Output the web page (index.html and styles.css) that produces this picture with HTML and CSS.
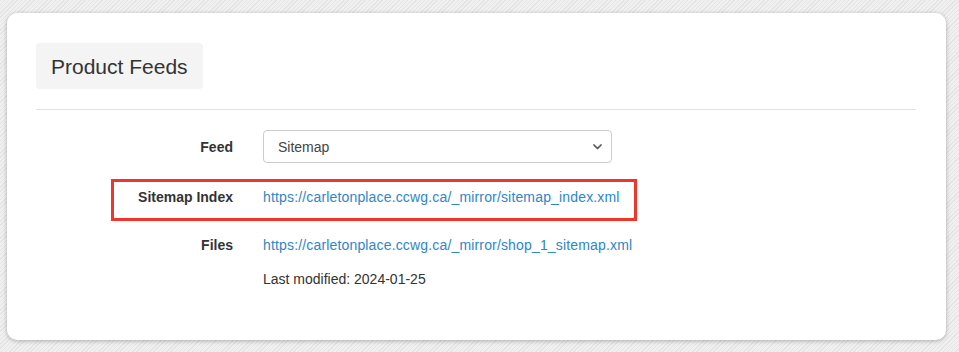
FILE: index.html
```html
<!DOCTYPE html>
<html>
  <head>
    <title>Product Feeds</title>
    <link rel="stylesheet" href="styles.css">
  </head>
  <body>
    <div class="panel">
      <h2 class="panel-title">Product Feeds</h2>
      <hr class="divider">

      <!-- Feed picker -->
      <div class="form-row feed-row">
        <label class="form-label">Feed</label>
        <div class="select-box">
          <span>Sitemap</span>
          <svg class="chevron" width="9" height="6" viewBox="0 0 9 6">
            <path d="M1 1 L4.5 4.5 L8 1" fill="none" stroke="#555" stroke-width="1.7" stroke-linecap="round" stroke-linejoin="round"/>
          </svg>
        </div>
      </div>

      <!-- Sitemap index (highlighted) -->
      <div class="form-row index-row">
        <label class="form-label">Sitemap Index</label>
        <a class="feed-link" href="#">https://carletonplace.ccwg.ca/_mirror/sitemap_index.xml</a>
        <div class="highlight"></div>
      </div>

      <!-- Files -->
      <div class="form-row files-row">
        <label class="form-label">Files</label>
        <div class="files">
          <a class="feed-link" href="#">https://carletonplace.ccwg.ca/_mirror/shop_1_sitemap.xml</a>
          <p class="modified">Last modified: 2024-01-25</p>
        </div>
      </div>
    </div>
  </body>
</html>
```

FILE: styles.css
```css
body {
  margin: 0;
  font-family: "Liberation Sans", Arial, sans-serif;
  font-size: 14px;
  color: #333;
  background-color: #ebebeb;
  background-image: repeating-linear-gradient(135deg, #e4e4e4 0 1px, #f0f0f0 1px 3px);
  height: 352px;
  overflow: hidden;
}

.panel {
  margin: 13px 13px 0 7px;
  width: 880px;
  height: 267px;
  padding: 30px 30px 30px 29px;
  background-color: #fff;
  border-radius: 10px;
  box-shadow: 0 1px 4px rgba(0, 0, 0, 0.28);
}

.panel-title {
  display: inline-block;
  margin: 0;
  padding: 0 15px;
  height: 46px;
  line-height: 47px;
  font-size: 21px;
  font-weight: normal;
  color: #333;
  background-color: #f4f4f4;
  border-radius: 4px;
}

.divider {
  margin: 20px 0 0 0;
  border: none;
  border-top: 1px solid #e3e3e3;
  height: 0;
}

/* Form rows */
.form-row {
  display: flex;
  align-items: flex-start;
  gap: 30px;
  position: relative;
}

.form-label {
  width: 197px;
  flex: none;
  text-align: right;
  font-weight: bold;
  line-height: 20px;
}

.feed-row {
  margin-top: 20px;
  align-items: center;
}

.select-box {
  width: 324px;
  height: 31px;
  padding: 0 9px 0 14px;
  border: 1px solid #ccc;
  border-radius: 4px;
  display: flex;
  align-items: center;
  justify-content: space-between;
  color: #444;
}

.index-row {
  margin-top: 24px;
}

.files-row {
  margin-top: 28px;
}

.feed-link {
  color: #2f86c8;
  text-decoration: none;
  line-height: 20px;
  letter-spacing: 0.16px;
}

.modified {
  margin: 14px 0 0 0;
  line-height: 20px;
}

/* Red annotation box */
.highlight {
  position: absolute;
  left: 75px;
  top: -8px;
  width: 520px;
  height: 36px;
  border: 3px solid #f2352b;
  pointer-events: none;
}
```
